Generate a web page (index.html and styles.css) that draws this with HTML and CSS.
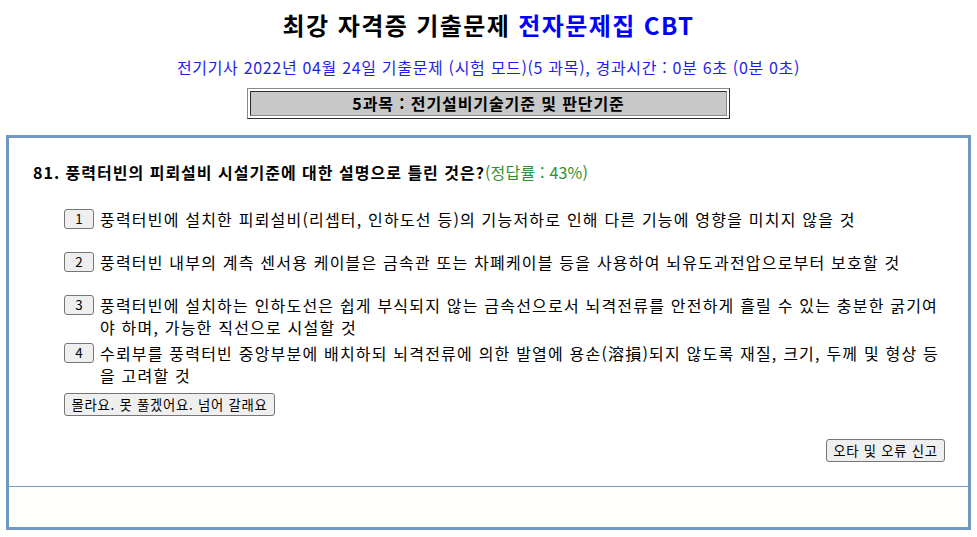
FILE: index.html
```html
<!DOCTYPE html>
<html lang="ko">
<head>
<meta charset="utf-8">
<title>최강 자격증 기출문제 전자문제집 CBT</title>
<link rel="stylesheet" href="styles.css">
</head>
<body>
<header class="head">
  <h1 class="title">최강 자격증 기출문제 <span class="title-blue">전자문제집 CBT</span></h1>
  <p class="subtitle">전기기사 2022년 04월 24일 기출문제 (시험 모드)(5 과목), 경과시간 : 0분 6초 (0분 0초)</p>
  <div class="subject-outer"><div class="subject-inner">5과목 : 전기설비기술기준 및 판단기준</div></div>
</header>
<main class="box">
  <section class="content">
    <p class="question">81. 풍력터빈의 피뢰설비 시설기준에 대한 설명으로 틀린 것은?<span class="rate">(정답률 : 43%)</span></p>
    <div class="options">
      <div class="option"><button class="num">1</button><span class="opt-text">풍력터빈에 설치한 피뢰설비(리셉터, 인하도선 등)의 기능저하로 인해 다른 기능에 영향을 미치지 않을 것</span></div>
      <div class="option"><button class="num">2</button><span class="opt-text">풍력터빈 내부의 계측 센서용 케이블은 금속관 또는 차폐케이블 등을 사용하여 뇌유도과전압으로부터 보호할 것</span></div>
      <div class="option"><button class="num">3</button><span class="opt-text">풍력터빈에 설치하는 인하도선은 쉽게 부식되지 않는 금속선으로서 뇌격전류를 안전하게 흘릴 수 있는 충분한 굵기여야 하며, 가능한 직선으로 시설할 것</span></div>
      <div class="option"><button class="num">4</button><span class="opt-text">수뢰부를 풍력터빈 중앙부분에 배치하되 뇌격전류에 의한 발열에 용손(溶損)되지 않도록 재질, 크기, 두께 및 형상 등을 고려할 것</span></div>
    </div>
    <div class="skip-row"><button class="btn btn-skip">몰라요. 못 풀겠어요. 넘어 갈래요</button></div>
    <div class="report-row"><button class="btn btn-report">오타 및 오류 신고</button></div>
  </section>
  <footer class="box-foot"></footer>
</main>
</body>
</html>
```
FILE: styles.css
```css
html, body {
  margin: 0;
  padding: 0;
  background: #ffffff;
}
body {
  font-family: "Noto Sans CJK KR", "Noto Sans", sans-serif;
  color: #000;
  font-size: 16px;
}
.head {
  display: flex;
  flex-direction: column;
  align-items: center;
}
.title {
  margin: 0;
  padding-top: 10px;
  font-size: 24px;
  line-height: 30px;
  font-weight: bold;
  letter-spacing: 1.4px;
}
.title-blue {
  color: #0000ff;
}
.subtitle {
  margin: 16px 0 0;
  font-size: 16px;
  line-height: 22px;
  color: #1e1ee8;
  letter-spacing: 0.68px;
}
.subject-outer {
  margin-top: 10px;
  width: 483px;
  box-sizing: border-box;
  border: 1px solid;
  border-color: #8a8a8a #2e2e2e #2e2e2e #8a8a8a;
  padding: 2px;
  background: #fff;
}
.subject-inner {
  border: 1px solid;
  border-color: #2e2e2e #8a8a8a #8a8a8a #2e2e2e;
  background: #c8c8c8;
  height: 23px;
  line-height: 23px;
  text-align: center;
  font-weight: bold;
  font-size: 16px;
  letter-spacing: 0.9px;
}
.box {
  margin: 16px 0 0 6px;
  width: 965px;
  box-sizing: border-box;
  border: 3px solid #6f97c1;
}
.content {
  padding: 23px 23px 24px 24px;
  border-bottom: 1px solid #7497bd;
}
.question {
  margin: 0;
  line-height: 22px;
  font-weight: bold;
  font-size: 16px;
  letter-spacing: 1px;
}
.rate {
  font-weight: normal;
  color: #2f8f2f;
  letter-spacing: 0.2px;
}
.options {
  margin: 25px 2px 0 31px;
}
.option {
  display: flex;
  align-items: flex-start;
  min-height: 39px;
  margin-bottom: 4px;
}
.num {
  flex: none;
  width: 30px;
  height: 20px;
  margin-top: 1px;
  padding: 0;
  letter-spacing: 0;
}
.opt-text {
  margin-left: 6px;
  line-height: 22px;
  letter-spacing: 1.2px;
}
button {
  font-family: "Noto Sans CJK KR", "Noto Sans", sans-serif;
  font-size: 13.33px;
  color: #000;
  background: #efefef;
  border: 1px solid #767676;
  border-radius: 3px;
  line-height: 1;
  white-space: nowrap;
}
.skip-row {
  margin-left: 31px;
  padding-top: 1px;
}
.btn {
  height: 23px;
  padding: 0;
  letter-spacing: 0.75px;
}
.btn-skip {
  width: 211px;
}
.report-row {
  margin-top: 23px;
  display: flex;
  justify-content: flex-end;
}
.btn-report {
  width: 119px;
}
.box-foot {
  height: 40px;
  background: #fffffb;
}
```
